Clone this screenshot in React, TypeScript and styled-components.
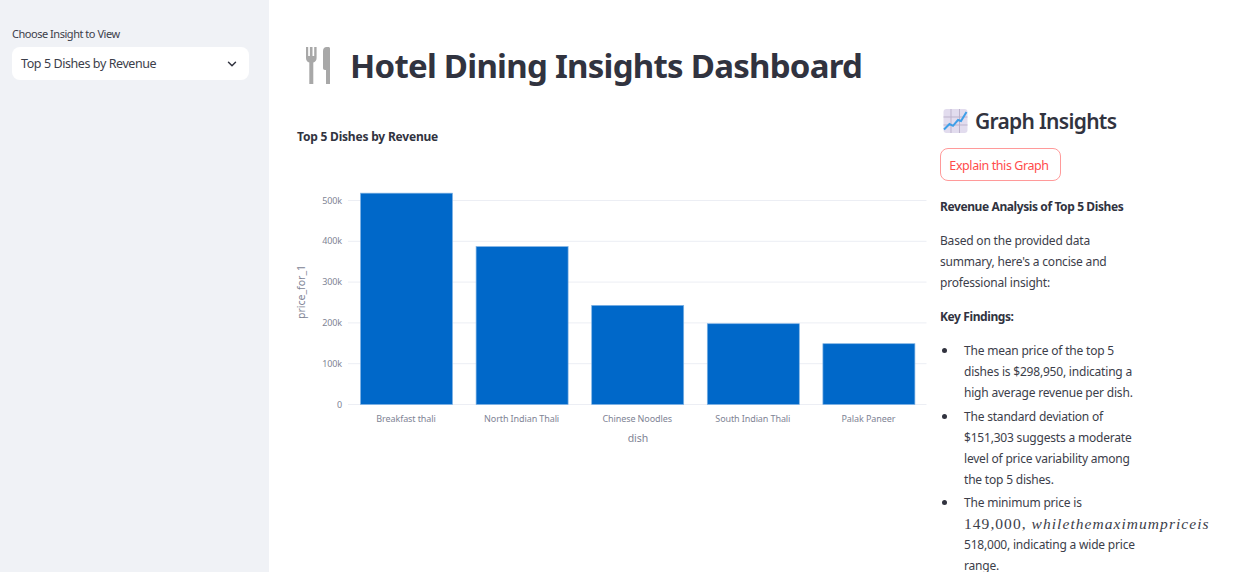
import styled, { createGlobalStyle } from "styled-components";
import { ChevronDown } from "lucide-react";

const GlobalStyle = createGlobalStyle`
  html, body {
    margin: 0;
    height: 100%;
    background: #ffffff;
  }
  body {
    font-family: "Noto Sans", "Open Sans", sans-serif;
    color: #31333f;
    overflow: hidden;
  }
`;

const Page = styled.div`
  display: flex;
  height: 572px;
  overflow: hidden;
`;

const Sidebar = styled.aside`
  width: 269px;
  flex: none;
  box-sizing: border-box;
  padding: 26px 20px 0 12px;
  background: #f0f2f6;
`;

const FieldLabel = styled.label`
  display: block;
  font-size: 11px;
  line-height: 15px;
  letter-spacing: -0.47px;
  margin-bottom: 6px;
  color: #3c3e4a;
`;

const Select = styled.div`
  display: flex;
  align-items: center;
  justify-content: space-between;
  height: 33px;
  padding: 0 10px 0 9px;
  border-radius: 8px;
  background: #ffffff;
  font-size: 12.5px;
  letter-spacing: -0.42px;
  color: #3c3e4a;
`;

const Main = styled.main`
  flex: 1;
  min-width: 0;
  padding: 0 0 0 28px;
`;

const Title = styled.h1`
  display: flex;
  align-items: center;
  gap: 17px;
  height: 131px;
  margin: 0 0 0 9px;
  font-size: 33px;
  font-weight: 700;
  letter-spacing: -0.74px;
  color: #31333f;
`;

const Columns = styled.div`
  display: flex;
  gap: 13px;
  margin-top: -28px;
`;

const ChartColumn = styled.section`
  width: 630px;
  flex: none;
`;

const ChartTitle = styled.div`
  padding-top: 26px;
  font-size: 12px;
  line-height: 16px;
  font-weight: 700;
  letter-spacing: -0.2px;
`;

const Chart = styled.svg`
  display: block;
  margin-top: 44px;
  overflow: visible;
`;

const Insights = styled.section`
  width: 240px;
  flex: none;
  padding-top: 1px;
  font-size: 12px;
  line-height: 21px;
  letter-spacing: -0.2px;
  color: #3c3e4a;
`;

const InsightsTitle = styled.h2`
  display: flex;
  align-items: center;
  gap: 7px;
  height: 34px;
  margin: 0 0 10px 3px;
  font-size: 21px;
  font-weight: 600;
  letter-spacing: -0.7px;
  color: #31333f;
`;

const ExplainButton = styled.button`
  display: block;
  width: 121px;
  height: 33px;
  padding: 0 2px 0 0;
  margin: 0 0 15px -0.5px;
  border: 1px solid #ff9a9a;
  border-radius: 8px;
  background: #ffffff;
  font: inherit;
  font-size: 12.5px;
  line-height: 33px;
  letter-spacing: -0.42px;
  color: #ff4b4b;
`;

const Paragraph = styled.p`
  width: 195px;
  margin: 0 0 13px;
`;

const Strong = styled.p`
  margin: 0 0 13px;
  font-weight: 700;
  letter-spacing: -0.4px;
  color: #31333f;
`;

const BulletList = styled.ul`
  width: 199px;
  margin: 1px 0 0;
  padding: 0;
  list-style: none;
`;

const Bullet = styled.li`
  position: relative;
  padding-left: 24px;
  margin-bottom: 2.5px;

  &::before {
    content: "";
    position: absolute;
    left: 2px;
    top: 8px;
    width: 5px;
    height: 5px;
    border-radius: 50%;
    background: #31333f;
  }
`;

const MathLine = styled.span`
  display: block;
  white-space: nowrap;
  font-family: "Liberation Serif", serif;
  font-size: 15.5px;
  letter-spacing: 1.05px;
`;

const MathItalic = styled.i`
  font-style: italic;
`;

const bars = [
  { name: "Breakfast thali", value: 518000 },
  { name: "North Indian Thali", value: 387000 },
  { name: "Chinese Noodles", value: 243000 },
  { name: "South Indian Thali", value: 198000 },
  { name: "Palak Paneer", value: 149000 },
];

const ticks = [0, 100, 200, 300, 400, 500];

// chart coordinates, origin is the top left of the svg
const originY = 215;
const perK = 0.408;
const barStart = 63;
const barStep = 115.6;
const barWidth = 92;

function RevenueChart() {
  return (
    <Chart width={630} height={270} viewBox="0 0 630 270">
      {ticks.map((t) => (
        <g key={t}>
          <line x1={51} x2={629.5} y1={originY - t * perK + 0.5} y2={originY - t * perK + 0.5} stroke="#eceef4" strokeWidth={1} />
          <text x={45} y={originY - t * perK + 3.5} textAnchor="end" fontSize={9} letterSpacing={-0.1} fill="#808495">
            {t === 0 ? "0" : `${t}k`}
          </text>
        </g>
      ))}
      {bars.map((b, i) => {
        const h = (b.value / 1000) * perK;
        const x = barStart + i * barStep;
        return (
          <g key={b.name}>
            <rect x={x + 0.5} y={originY - h + 0.5} width={barWidth} height={h} fill="#0068c9" stroke="#7fb3e4" strokeWidth={0.7} />
            <text x={x + barWidth / 2} y={233} textAnchor="middle" fontSize={9} letterSpacing={-0.1} fill="#808495">
              {b.name}
            </text>
          </g>
        );
      })}
      <text x={341} y={253} textAnchor="middle" fontSize={10.5} fill="#808495">dish</text>
      <text transform="translate(8 103) rotate(-90)" textAnchor="middle" fontSize={10.5} fill="#808495">price_for_1</text>
    </Chart>
  );
}

function CutleryIcon() {
  return (
    <svg width="27" height="37" viewBox="0 0 27 37" fill="#a8a8a8">
      <path d="M0 0h2.2v9h1.7V0h2.6v9h1.7V0H10.600v11c0 2.500-1.500 4-3.300 4.600V37H3.300V15.600C1.500 15 0 13.500 0 11z" />
      <path d="M17 4c0-2.500 1.500-4 3.500-4h1.900c1 0 1.600.6 1.600 1.600V37h-4V23h-1c-1.300 0-2-.8-2-2z" />
    </svg>
  );
}

function ChartIcon() {
  return (
    <svg width="25" height="24" viewBox="0 0 25 24">
      <rect x="0.500" y="0" width="24" height="24" rx="3" fill="#e2dcee" />
      <path d="M8 0v24M16.500 0v24M0.500 8h24M0.500 16h24" stroke="#bdb3cc" strokeWidth="1" />
      <path d="M1 20.500l5.500-5.500 3.500 1.800 5-5.800 3 1 5.500-9" fill="none" stroke="#3f9fe8" strokeWidth="2" />
    </svg>
  );
}

export default function App() {
  return (
    <Page>
      <GlobalStyle />
      <Sidebar>
        <FieldLabel>Choose Insight to View</FieldLabel>
        <Select>
          Top 5 Dishes by Revenue
          <ChevronDown size={14} strokeWidth={2.500} color="#31333f" />
        </Select>
      </Sidebar>
      <Main>
        <Title>
          <CutleryIcon />
          Hotel Dining Insights Dashboard
        </Title>
        <Columns>
          <ChartColumn>
            <ChartTitle>Top 5 Dishes by Revenue</ChartTitle>
            <RevenueChart />
          </ChartColumn>
          <Insights>
            <InsightsTitle>
              <ChartIcon />
              Graph Insights
            </InsightsTitle>
            <ExplainButton>Explain this Graph</ExplainButton>
            <Strong>Revenue Analysis of Top 5 Dishes</Strong>
            <Paragraph>Based on the provided data summary, here's a concise and professional insight:</Paragraph>
            <Strong>Key Findings:</Strong>
            <BulletList>
              <Bullet>The mean price of the top 5 dishes is $298,950, indicating a high average revenue per dish.</Bullet>
              <Bullet>The standard deviation of $151,303 suggests a moderate level of price variability among the top 5 dishes.</Bullet>
              <Bullet>
                The minimum price is
                <MathLine>
                  149,000, <MathItalic>whilethemaximumpriceis</MathItalic>
                </MathLine>
                518,000, indicating a wide price range.
              </Bullet>
            </BulletList>
          </Insights>
        </Columns>
      </Main>
    </Page>
  );
}
